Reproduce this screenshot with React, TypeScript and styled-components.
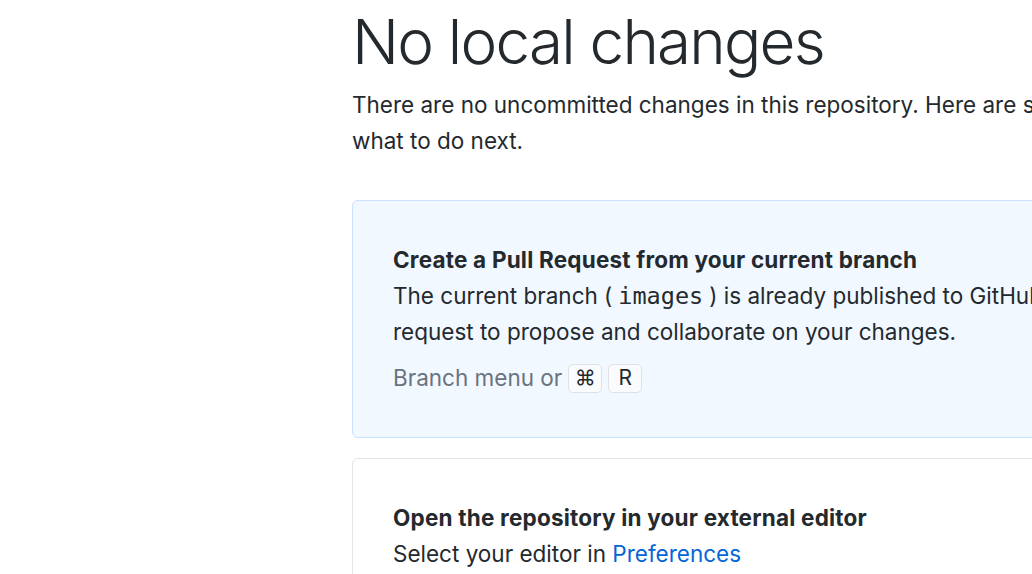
import styled, { createGlobalStyle } from 'styled-components';

const GlobalStyle = createGlobalStyle`
  html, body {
    margin: 0;
    padding: 0;
    background: #ffffff;
    overflow: hidden;
  }
  body {
    font-family: Inter, "Noto Sans", sans-serif;
    color: #24292e;
  }
`;

const Page = styled.div`
  width: 1032px;
  height: 574px;
  overflow: hidden;
  padding-left: 352px;
  box-sizing: border-box;
`;

const Content = styled.div`
  width: 1015px;
`;

const Title = styled.h1`
  margin: 0;
  padding-top: 4px;
  font-size: 62px;
  font-weight: 300;
  line-height: 76px;
  letter-spacing: -1.8px;
  color: #24292e;
`;

const Lead = styled.p`
  margin: 7px 0 0;
  font-size: 22.5px;
  line-height: 36px;
  color: #24292e;
`;

const CardList = styled.div`
  display: flex;
  flex-direction: column;
  gap: 20px;
  width: 930px;
  margin-top: 41px;
`;

const Card = styled.div<{ $highlight?: boolean }>`
  border: 1px solid ${(p) => (p.$highlight ? '#c8e1ff' : '#e1e4e8')};
  background: ${(p) => (p.$highlight ? '#f1f8ff' : '#ffffff')};
  border-radius: 6px;
  padding: 41px 40px;
`;

const CardTitle = styled.div`
  font-size: 22.5px;
  font-weight: 700;
  line-height: 36px;
  letter-spacing: 0.2px;
`;

const CardText = styled.div`
  font-size: 22.5px;
  line-height: 36px;
`;

const Ref = styled.code`
  font-family: "DejaVu Sans Mono", "Liberation Mono", monospace;
  font-size: 23.5px;
  margin: 0 6px;
`;

const Link = styled.a`
  color: #0366d6;
  text-decoration: none;
`;

const Shortcut = styled.div`
  display: flex;
  align-items: center;
  margin-top: 10px;
  font-size: 22.5px;
  line-height: 36px;
  color: #6a737d;
  gap: 6px;
`;

const Kbd = styled.kbd`
  display: inline-flex;
  align-items: center;
  justify-content: center;
  min-width: 34px;
  height: 29px;
  box-sizing: border-box;
  border: 1px solid #dfe2e5;
  border-radius: 5px;
  background: #fafbfc;
  font-family: Inter, "DejaVu Sans", sans-serif;
  font-size: 21px;
  color: #24292e;
`;

export default function App() {
  return (
    <Page>
      <GlobalStyle />
      <Content>
        <Title>No local changes</Title>
        <Lead>
          There are no uncommitted changes in this repository. Here are some friendly suggestions for
          what to do next.
        </Lead>
        <CardList>
          <Card $highlight>
            <CardTitle>Create a Pull Request from your current branch</CardTitle>
            <CardText>
              The current branch (<Ref>images</Ref>) is already published to GitHub. Create a pull
              request to propose and collaborate on your changes.
            </CardText>
            <Shortcut>
              Branch menu or
              <Kbd>⌘</Kbd>
              <Kbd>R</Kbd>
            </Shortcut>
          </Card>
          <Card>
            <CardTitle>Open the repository in your external editor</CardTitle>
            <CardText>
              Select your editor in <Link href="#">Preferences</Link>
            </CardText>
          </Card>
        </CardList>
      </Content>
    </Page>
  );
}
